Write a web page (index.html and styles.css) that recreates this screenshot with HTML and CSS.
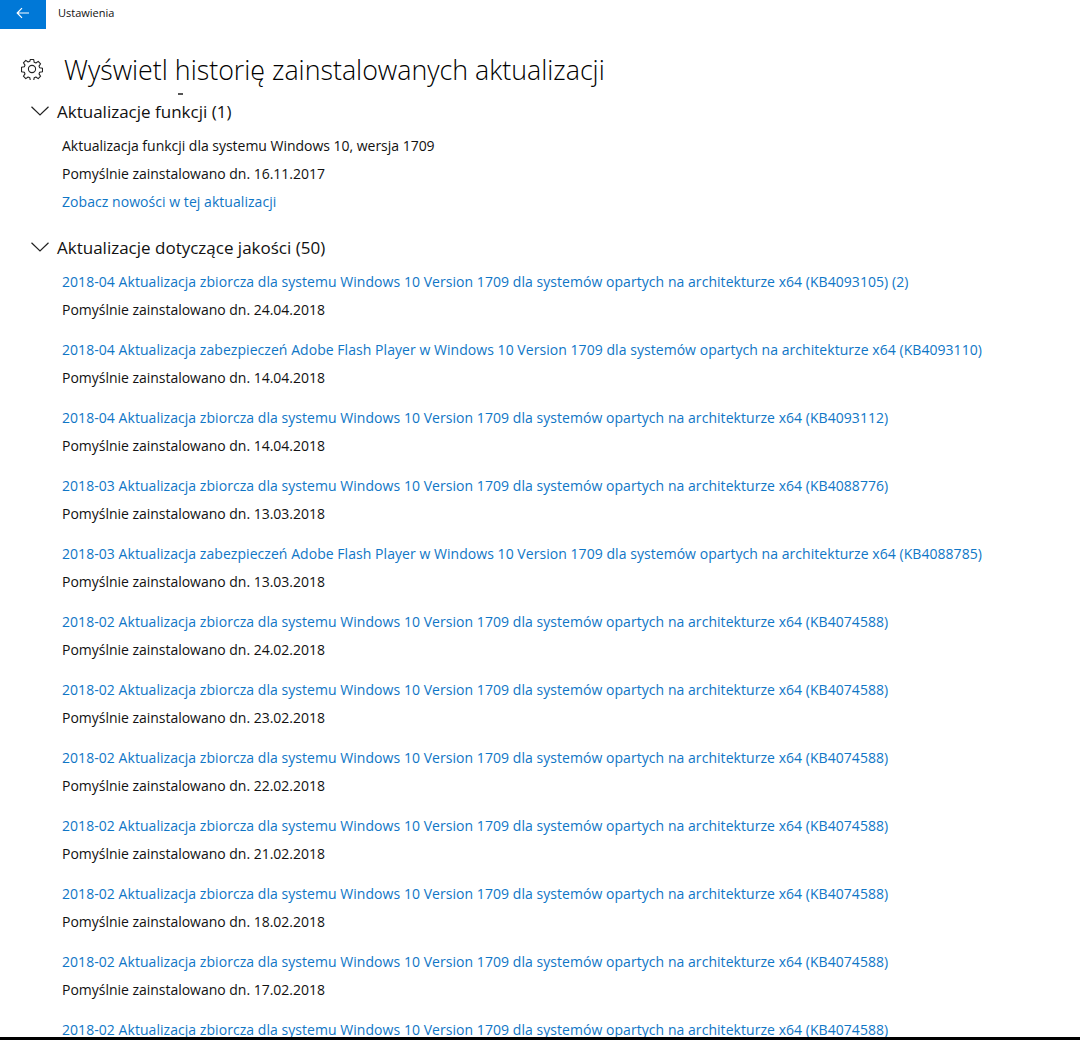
FILE: index.html
```html
<!DOCTYPE html>
<html lang="pl">
<head>
<meta charset="utf-8">
<title>Ustawienia</title>
<link rel="stylesheet" href="styles.css">
</head>
<body>
<div class="window">
  <div class="topbar">
    <div class="backbtn">
      <svg width="14" height="14" viewBox="0 0 14 14" fill="none" stroke="#fff" stroke-width="1.2"><path d="M13 7H1.200M6 2.200L1.200 7 6 11.800"/></svg>
    </div>
    <div class="apptitle">Ustawienia</div>
  </div>
  <div class="header">
    <svg class="gear" width="22" height="22" viewBox="0 0 22 22" fill="none" stroke="#222" stroke-width="1.1"><path d="M9.300 1.500h3.400l.5 2.800 1.700.7 2.300-1.600 2.400 2.400-1.600 2.300.7 1.700 2.800.5v3.400l-2.800.5-.7 1.700 1.600 2.300-2.400 2.400-2.300-1.600-1.700.7-.5 2.800H9.300l-.5-2.800-1.700-.7-2.300 1.600-2.400-2.400 1.600-2.300-.7-1.700-2.800-.5V9.300l2.800-.5.700-1.700-1.600-2.300 2.400-2.400 2.300 1.600 1.700-.7z" stroke-linejoin="round"/><circle cx="11" cy="11" r="3.600"/></svg>
    <h1 class="pagetitle">Wyświetl historię zainstalowanych aktualizacji</h1>
  </div>
  <div class="scroller">
    <div class="cliptick"></div>
    <div class="group first">
      <h2 class="grouptitle"><svg class="chev" width="18" height="10" viewBox="0 0 18 10" fill="none" stroke="#222" stroke-width="1.2"><path d="M.5 .7L9 9l8.500-8.300"/></svg>Aktualizacje funkcji (1)</h2>
      <div class="row">Aktualizacja funkcji dla systemu Windows 10, wersja 1709</div>
      <div class="row">Pomyślnie zainstalowano dn. 16.11.2017</div>
      <div class="row"><a class="link">Zobacz nowości w tej aktualizacji</a></div>
    </div>
    <div class="group">
      <h2 class="grouptitle"><svg class="chev" width="18" height="10" viewBox="0 0 18 10" fill="none" stroke="#222" stroke-width="1.2"><path d="M.5 .7L9 9l8.500-8.300"/></svg>Aktualizacje dotyczące jakości (50)</h2>
      <div class="item"><div class="row"><a class="link">2018-04 Aktualizacja zbiorcza dla systemu Windows 10 Version 1709 dla systemów opartych na architekturze x64 (KB4093105) (2)</a></div><div class="row">Pomyślnie zainstalowano dn. 24.04.2018</div></div>
      <div class="item"><div class="row"><a class="link">2018-04 Aktualizacja zabezpieczeń Adobe Flash Player w Windows 10 Version 1709 dla systemów opartych na architekturze x64 (KB4093110)</a></div><div class="row">Pomyślnie zainstalowano dn. 14.04.2018</div></div>
      <div class="item"><div class="row"><a class="link">2018-04 Aktualizacja zbiorcza dla systemu Windows 10 Version 1709 dla systemów opartych na architekturze x64 (KB4093112)</a></div><div class="row">Pomyślnie zainstalowano dn. 14.04.2018</div></div>
      <div class="item"><div class="row"><a class="link">2018-03 Aktualizacja zbiorcza dla systemu Windows 10 Version 1709 dla systemów opartych na architekturze x64 (KB4088776)</a></div><div class="row">Pomyślnie zainstalowano dn. 13.03.2018</div></div>
      <div class="item"><div class="row"><a class="link">2018-03 Aktualizacja zabezpieczeń Adobe Flash Player w Windows 10 Version 1709 dla systemów opartych na architekturze x64 (KB4088785)</a></div><div class="row">Pomyślnie zainstalowano dn. 13.03.2018</div></div>
      <div class="item"><div class="row"><a class="link">2018-02 Aktualizacja zbiorcza dla systemu Windows 10 Version 1709 dla systemów opartych na architekturze x64 (KB4074588)</a></div><div class="row">Pomyślnie zainstalowano dn. 24.02.2018</div></div>
      <div class="item"><div class="row"><a class="link">2018-02 Aktualizacja zbiorcza dla systemu Windows 10 Version 1709 dla systemów opartych na architekturze x64 (KB4074588)</a></div><div class="row">Pomyślnie zainstalowano dn. 23.02.2018</div></div>
      <div class="item"><div class="row"><a class="link">2018-02 Aktualizacja zbiorcza dla systemu Windows 10 Version 1709 dla systemów opartych na architekturze x64 (KB4074588)</a></div><div class="row">Pomyślnie zainstalowano dn. 22.02.2018</div></div>
      <div class="item"><div class="row"><a class="link">2018-02 Aktualizacja zbiorcza dla systemu Windows 10 Version 1709 dla systemów opartych na architekturze x64 (KB4074588)</a></div><div class="row">Pomyślnie zainstalowano dn. 21.02.2018</div></div>
      <div class="item"><div class="row"><a class="link">2018-02 Aktualizacja zbiorcza dla systemu Windows 10 Version 1709 dla systemów opartych na architekturze x64 (KB4074588)</a></div><div class="row">Pomyślnie zainstalowano dn. 18.02.2018</div></div>
      <div class="item"><div class="row"><a class="link">2018-02 Aktualizacja zbiorcza dla systemu Windows 10 Version 1709 dla systemów opartych na architekturze x64 (KB4074588)</a></div><div class="row">Pomyślnie zainstalowano dn. 17.02.2018</div></div>
      <div class="item"><div class="row"><a class="link">2018-02 Aktualizacja zbiorcza dla systemu Windows 10 Version 1709 dla systemów opartych na architekturze x64 (KB4074588)</a></div></div>
    </div>
  </div>
  <div class="bottomline"></div>
</div>
</body>
</html>
```

FILE: styles.css
```css
html, body {
  margin: 0;
  padding: 0;
  background: #fff;
}
body {
  font-family: "Open Sans", "Liberation Sans", sans-serif;
  color: #111;
}
.window {
  width: 1080px;
  height: 1040px;
  display: flex;
  flex-direction: column;
  overflow: hidden;
}
.topbar {
  display: flex;
  align-items: center;
  height: 29px;
  flex: none;
}
.backbtn {
  width: 46px;
  height: 29px;
  box-sizing: border-box;
  padding-bottom: 4px;
  background: #0078d7;
  display: flex;
  align-items: center;
  justify-content: center;
}
.apptitle {
  margin-left: 12px;
  margin-top: -5px;
  font-size: 11px;
}
.header {
  display: flex;
  align-items: center;
  height: 63px;
  padding-top: 17px;
  padding-left: 21px;
  flex: none;
  box-sizing: border-box;
}
.gear {
  flex: none;
}
.pagetitle {
  margin: 0 0 0 21px;
  font-size: 26.8px;
  font-weight: 300;
  white-space: nowrap;
  color: #000;
}
.scroller {
  flex: 1;
  min-height: 0;
  overflow: hidden;
}
.cliptick {
  width: 5px;
  height: 2px;
  margin: 1px 0 0 178px;
  background: #555;
}
.group {
  padding-left: 31px;
}
.group.first {
  padding-top: 2px;
  padding-bottom: 17px;
}
.grouptitle {
  margin: 0 0 7px;
  height: 28px;
  display: flex;
  align-items: center;
  font-size: 17px;
  font-weight: 400;
  white-space: nowrap;
}
.chev {
  margin-right: 8px;
}
.row {
  height: 28px;
  line-height: 28px;
  padding-left: 31px;
  font-size: 14px;
  letter-spacing: -0.02px;
  white-space: nowrap;
}
.item {
  padding-bottom: 12px;
}
.link {
  color: #0f76c6;
  letter-spacing: 0.05px;
}
.bottomline {
  height: 3px;
  background: #000;
  flex: none;
}
```
